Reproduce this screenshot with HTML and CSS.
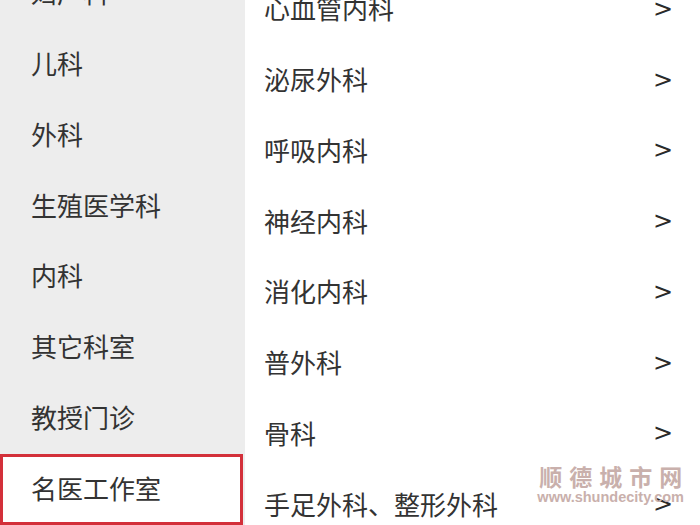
FILE: index.html
```html
<!DOCTYPE html>
<html lang="zh-CN">
<head>
    <meta charset="UTF-8">
    <meta name="viewport" content="width=device-width, initial-scale=1.0">
    <title>科室列表</title>
    <link rel="stylesheet" href="styles.css">
</head>
<body>
    <div class="container">
        <div class="dept-side">
            <div class="side-item">妇产科</div>
            <div class="side-item">儿科</div>
            <div class="side-item">外科</div>
            <div class="side-item">生殖医学科</div>
            <div class="side-item">内科</div>
            <div class="side-item">其它科室</div>
            <div class="side-item">教授门诊</div>
            <div class="side-item active">名医工作室</div>
        </div>
        <div class="dept-list">
            <div class="list-item"><span>心血管内科</span><span class="arrow">&gt;</span></div>
            <div class="list-item"><span>泌尿外科</span><span class="arrow">&gt;</span></div>
            <div class="list-item"><span>呼吸内科</span><span class="arrow">&gt;</span></div>
            <div class="list-item"><span>神经内科</span><span class="arrow">&gt;</span></div>
            <div class="list-item"><span>消化内科</span><span class="arrow">&gt;</span></div>
            <div class="list-item"><span>普外科</span><span class="arrow">&gt;</span></div>
            <div class="list-item"><span>骨科</span><span class="arrow">&gt;</span></div>
            <div class="list-item"><span>手足外科、整形外科</span><span class="arrow">&gt;</span></div>
        </div>
    </div>
    <div class="watermark">
        <div class="wm-title">顺德城市网</div>
        <div class="wm-url">www.shundecity.com</div>
    </div>
</body>
</html>
```

FILE: styles.css
```css
* {
    margin: 0;
    padding: 0;
    box-sizing: border-box;
}

body {
    height: 100vh;
    overflow: hidden;
    background-color: white;
    font-family: "Noto Sans CJK SC", "Noto Sans", sans-serif;
    color: #333;
}

.container {
    height: 100vh;
    display: flex;
}

.dept-side {
    width: 245px;
    flex-shrink: 0;
    background-color: #ededed;
    margin-top: -41.4px;
}

.side-item {
    height: 70.75px;
    padding-left: 31px;
    padding-bottom: 4px;
    display: flex;
    align-items: center;
    font-size: 26px;
}

.side-item.active {
    width: 243px;
    background-color: white;
    border: 3px solid #d3303a;
    padding-left: 28px;
}

.dept-list {
    flex: 1;
    margin-top: -25.4px;
}

.list-item {
    height: 70.75px;
    padding-left: 19px;
    padding-right: 27px;
    padding-bottom: 4px;
    display: flex;
    align-items: center;
    justify-content: space-between;
    font-size: 26px;
}

.arrow {
    font-family: "DejaVu Sans", sans-serif;
    font-size: 24px;
    color: #2a2a2a;
    margin-top: 2px;
}

.watermark {
    position: absolute;
    right: 16px;
    bottom: 20px;
    color: #c9b0ac;
    text-align: center;
}

.wm-title {
    font-size: 23px;
    font-weight: bold;
    letter-spacing: 7px;
    margin-right: -7px;
    line-height: 26px;
}

.wm-url {
    font-family: "Liberation Sans", sans-serif;
    font-size: 14.5px;
    font-weight: bold;
    line-height: 16px;
}
```
